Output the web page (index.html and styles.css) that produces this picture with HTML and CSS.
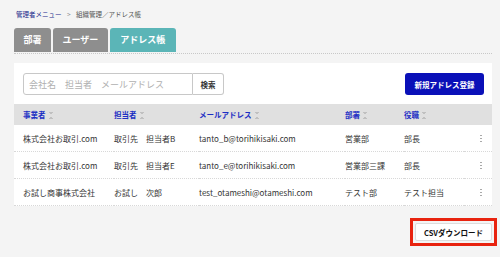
FILE: index.html
```html
<!DOCTYPE html>
<html lang="ja">
<head>
    <meta charset="UTF-8">
    <title>アドレス帳</title>
    <link rel="stylesheet" href="styles.css">
</head>
<body>
    <div class="breadcrumb">
        <a href="#">管理者メニュー</a>
        <span class="sep">&gt;</span>
        <span>組織管理／アドレス帳</span>
    </div>

    <div class="tabs">
        <div class="tab">部署</div>
        <div class="tab">ユーザー</div>
        <div class="tab active">アドレス帳</div>
    </div>

    <div class="card">
        <div class="toolbar">
            <div class="search">
                <input type="text" class="search-input" placeholder="会社名　担当者　メールアドレス">
                <button class="search-btn">検索</button>
            </div>
            <button class="btn-primary">新規アドレス登録</button>
        </div>

        <table class="list">
            <thead>
                <tr>
                    <th class="c-company">事業者<span class="sort"></span></th>
                    <th class="c-person">担当者<span class="sort"></span></th>
                    <th class="c-mail">メールアドレス<span class="sort"></span></th>
                    <th class="c-dept">部署<span class="sort"></span></th>
                    <th class="c-role">役職<span class="sort"></span></th>
                    <th class="c-menu"></th>
                </tr>
            </thead>
            <tbody>
                <tr>
                    <td>株式会社お取引.com</td>
                    <td>取引先　担当者B</td>
                    <td>tanto_b@torihikisaki.com</td>
                    <td>営業部</td>
                    <td>部長</td>
                    <td class="c-menu"><span class="kebab"></span></td>
                </tr>
                <tr>
                    <td>株式会社お取引.com</td>
                    <td>取引先　担当者E</td>
                    <td>tanto_e@torihikisaki.com</td>
                    <td>営業部三課</td>
                    <td>部長</td>
                    <td class="c-menu"><span class="kebab"></span></td>
                </tr>
                <tr>
                    <td>お試し商事株式会社</td>
                    <td>お試し　次郎</td>
                    <td>test_otameshi@otameshi.com</td>
                    <td>テスト部</td>
                    <td>テスト担当</td>
                    <td class="c-menu"><span class="kebab"></span></td>
                </tr>
            </tbody>
        </table>
    </div>

    <div class="footer">
        <div class="highlight">
            <button class="btn-csv">CSVダウンロード</button>
        </div>
    </div>
</body>
</html>
```

FILE: styles.css
```css
body {
    margin: 0;
    padding: 10px 8px 0 14px;
    background: #f4f4f4;
    font-family: "Noto Sans CJK JP", "Noto Sans", sans-serif;
    font-size: 8px;
    color: #333;
}
.breadcrumb {
    font-size: 6.5px;
    color: #555;
    height: 9px;
    line-height: 9px;
    padding-left: 2px;
}
.breadcrumb a {
    color: #1a2a8c;
    text-decoration: none;
}
.breadcrumb .sep {
    margin: 0 4px;
    color: #888;
}
.tabs {
    display: flex;
    gap: 2px;
    margin-top: 9px;
    padding-bottom: 1px;
    border-bottom: 1px dotted #c8c8c8;
}
.tab {
    height: 24px;
    line-height: 24px;
    padding: 0 9.5px;
    background: #8e8e8e;
    color: white;
    font-weight: bold;
    font-size: 9px;
    white-space: nowrap;
    border-radius: 3px 3px 0 0;
}
.tab.active {
    background: #5bb5b7;
    padding: 0 10.5px;
}
.card {
    background: white;
    width: 478px;
    margin-top: 9px;
}
.toolbar {
    display: flex;
    justify-content: space-between;
    align-items: center;
    padding: 10px 8px 9px 9px;
}
.search {
    display: flex;
}
.search-input {
    width: 170px;
    height: 22px;
    box-sizing: border-box;
    border: 1px solid #c8c8c8;
    border-radius: 3px 0 0 3px;
    padding: 0 5px;
    font-family: inherit;
    font-size: 9px;
}
.search-input::placeholder { color: #b0b0b0; }
.search-btn {
    height: 22px;
    width: 31px;
    box-sizing: border-box;
    border: 1px solid #c8c8c8;
    border-left: none;
    border-radius: 0 3px 3px 0;
    background: white;
    font-family: inherit;
    font-size: 7.5px;
    font-weight: bold;
    color: #333;
    padding: 0;
}
.btn-primary {
    height: 22px;
    width: 79px;
    border: none;
    border-radius: 3px;
    background: #0a10b8;
    color: white;
    font-family: inherit;
    font-size: 7.5px;
    font-weight: bold;
    padding: 0;
}
.list {
    width: 100%;
    border-collapse: collapse;
}
.list th {
    background: #e0e0e0;
    height: 21px;
    padding: 0;
    text-align: left;
    font-weight: bold;
    font-size: 7.5px;
    color: #1c2fc4;
}
.list td {
    height: 26px;
    padding: 0;
    border-bottom: 1px dotted #d8d8d8;
    font-size: 8px;
    color: #333;
}
.list th:first-child,
.list td:first-child { padding-left: 9px; }
.c-company { width: 91px; }
.c-person { width: 85px; }
.c-mail { width: 146px; }
.c-dept { width: 59px; }
.c-role { width: 60px; }
.sort {
    display: inline-block;
    width: 4px;
    height: 7px;
    margin-left: 3px;
    vertical-align: -1px;
    background:
        linear-gradient(to top right, transparent 50%, #c0c0c0 50%) 0 0 / 2px 3px no-repeat,
        linear-gradient(to top left, transparent 50%, #c0c0c0 50%) 2px 0 / 2px 3px no-repeat,
        linear-gradient(to bottom right, transparent 50%, #c0c0c0 50%) 0 4px / 2px 3px no-repeat,
        linear-gradient(to bottom left, transparent 50%, #c0c0c0 50%) 2px 4px / 2px 3px no-repeat;
}
.kebab {
    display: block;
    width: 2px;
    height: 9px;
    margin-left: 16px;
    background: radial-gradient(circle, #aaa 0.6px, transparent 0.9px) 0 0 / 2px 3px repeat-y;
}
.footer {
    display: flex;
    justify-content: flex-end;
    width: 483px;
    margin-top: 12px;
}
.highlight {
    border: 3px solid #e8230f;
    padding: 2px;
}
.btn-csv {
    display: block;
    width: 77px;
    height: 18px;
    border: 1px solid #ddd;
    border-radius: 2px;
    background: white;
    font-family: inherit;
    font-size: 7.5px;
    font-weight: bold;
    color: #111;
    padding: 0;
}
```
